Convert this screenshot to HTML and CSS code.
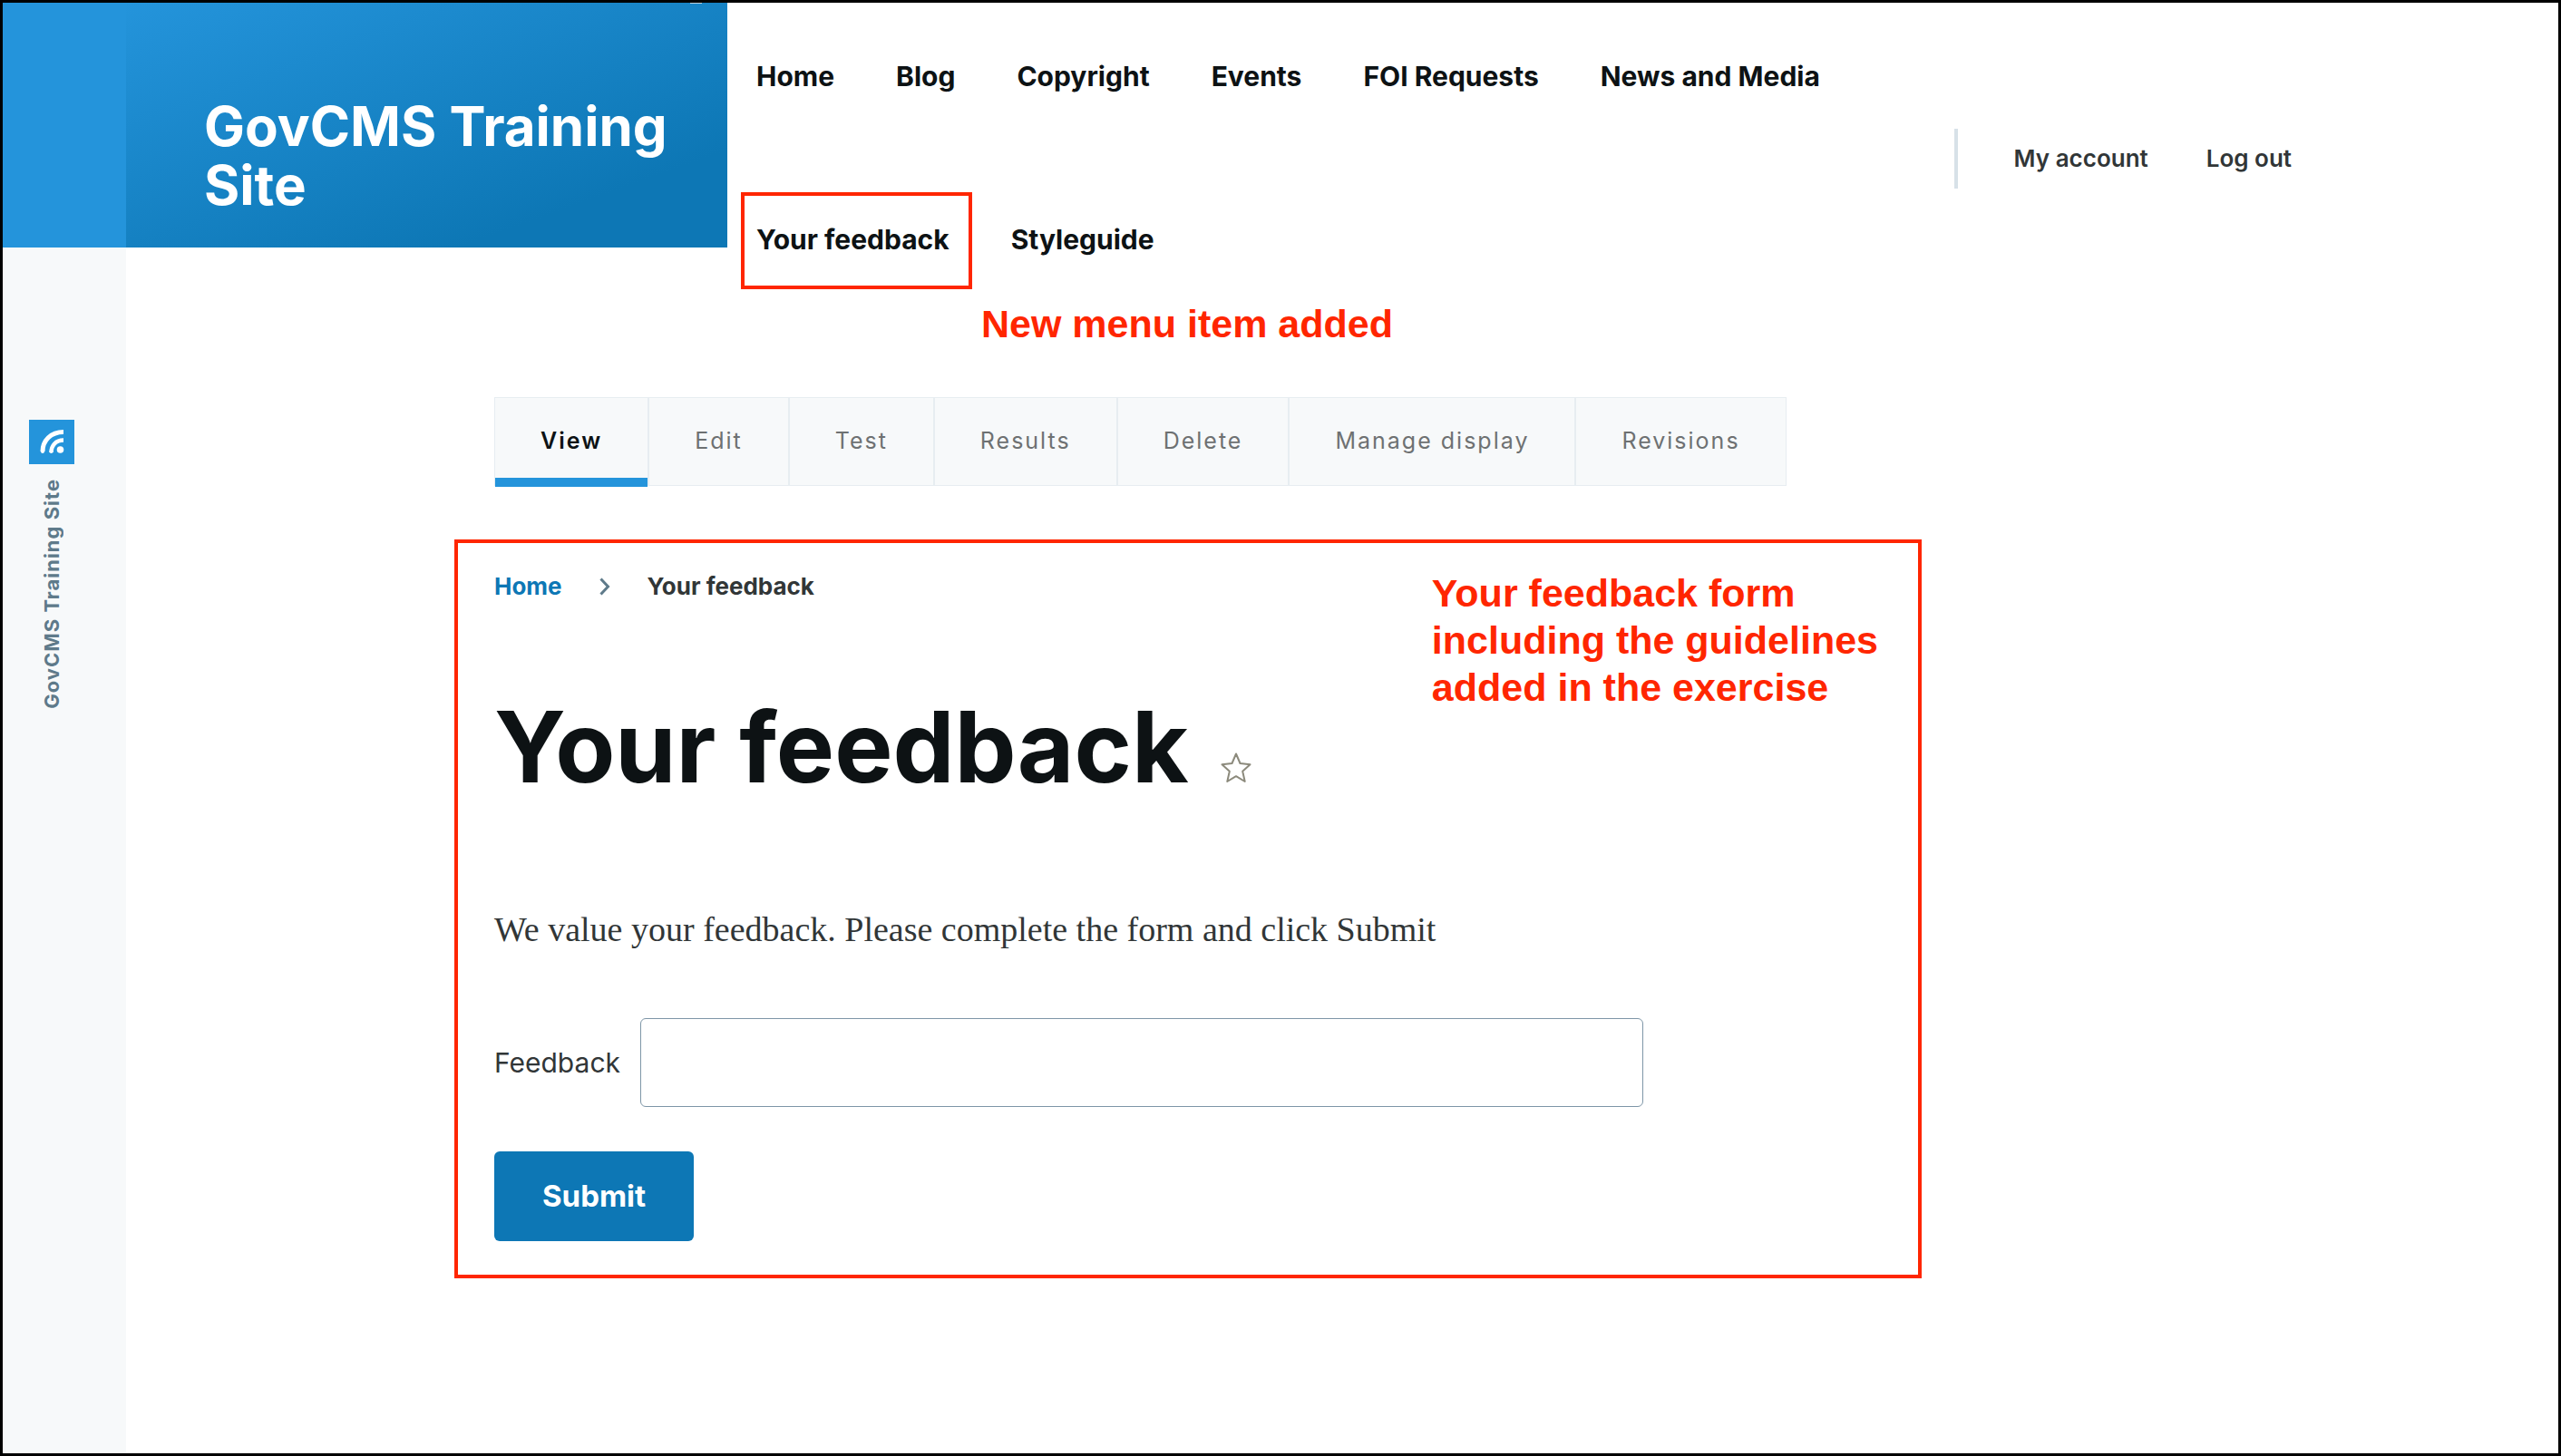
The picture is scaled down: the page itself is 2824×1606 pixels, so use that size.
FILE: index.html
```html
<!DOCTYPE html>
<html lang="en">
<head>
<meta charset="utf-8">
<meta name="viewport" content="width=device-width, initial-scale=1">
<title>Your feedback | GovCMS Training Site</title>
<link rel="stylesheet" href="styles.css">
</head>
<body>
<div class="page">
  <aside class="rail">
    <div class="rail-top"></div>
    <div class="rail-body">
      <a class="feed" href="#" aria-label="RSS feed">
        <svg viewBox="0 0 50 49" width="50" height="49" fill="none" stroke="#fff" stroke-width="4">
          <path d="M15 35C15 23 24 13.500 38 13.500" stroke-width="5"/>
          <path d="M15 35v0M24.500 35v0" stroke-linecap="round"/>
          <path d="M24.500 36C24.500 28.500 29.500 22.500 38 22.500" stroke-width="4.500"/>
          <circle cx="34.500" cy="33" r="3.800" fill="#fff" stroke="none"/>
        </svg>
      </a>
      <span class="rail-name">GovCMS Training Site</span>
    </div>
  </aside>
  <div class="column">
    <header class="header">
      <div class="brand">
        <a class="brand-name" href="#">GovCMS Training Site</a>
        <span class="brand-mark"></span>
      </div>
      <nav class="primary" aria-label="Main">
        <ul class="menu">
          <li><a href="#">Home</a></li>
          <li><a href="#">Blog</a></li>
          <li><a href="#">Copyright</a></li>
          <li><a href="#">Events</a></li>
          <li><a href="#">FOI Requests</a></li>
          <li><a href="#">News and Media</a></li>
          <li class="marked"><a href="#">Your feedback</a><span class="note note-menu">New menu item added</span></li>
          <li><a href="#">Styleguide</a></li>
        </ul>
      </nav>
      <nav class="account" aria-label="Account">
        <a href="#">My account</a>
        <a href="#">Log out</a>
      </nav>
    </header>
    <main class="main">
      <nav class="tabs" aria-label="Tabs">
        <a class="tab tab-active" href="#">View</a>
        <a class="tab" href="#">Edit</a>
        <a class="tab" href="#">Test</a>
        <a class="tab" href="#">Results</a>
        <a class="tab" href="#">Delete</a>
        <a class="tab" href="#">Manage display</a>
        <a class="tab" href="#">Revisions</a>
      </nav>
      <section class="panel">
        <nav class="crumbs" aria-label="Breadcrumb">
          <a href="#">Home</a>
          <svg viewBox="0 0 12 20" width="12" height="20" fill="none" stroke="#5e7a8a" stroke-width="3"><path d="M1.500 1.500l8 8.500-8 8.500"/></svg>
          <span>Your feedback</span>
        </nav>
        <p class="note note-form">Your feedback form<br>including the guidelines<br>added in the exercise</p>
        <div class="title-row">
          <h1 class="title">Your feedback</h1>
          <button class="star" type="button" aria-label="Add to shortcuts">
            <svg viewBox="0 0 34 34" width="34" height="34" fill="none" stroke="#8c8a7c" stroke-width="2" stroke-linejoin="round"><path d="M17 1.500l4.500 10.500 11 1.200-8.300 7.500 2.500 11.300L17 26.200 7.300 32l2.500-11.300L1.500 13.200l11-1.200z"/></svg>
          </button>
        </div>
        <p class="intro">We value your feedback. Please complete the form and click Submit</p>
        <form class="form">
          <div class="field">
            <label for="feedback">Feedback</label>
            <input id="feedback" type="text">
          </div>
          <button class="submit" type="submit">Submit</button>
        </form>
      </section>
    </main>
  </div>
</div>
</body>
</html>
```
FILE: styles.css
```css
*, *::before, *::after { box-sizing: border-box; }

body {
  margin: 0;
  background: #fff;
  color: #313637;
  font-family: Inter, "Liberation Sans", sans-serif;
}

a { color: inherit; text-decoration: none; }

.page {
  display: flex;
  min-height: 100vh;
  border: 3px solid #000;
}

/* Left rail */
.rail { flex: none; width: 136px; background: #f7f9fa; }
.rail-top { height: 270px; background: #2494db; }
.rail-body {
  display: flex;
  flex-direction: column;
  align-items: center;
  width: 50px;
  margin: 190px 0 0 29px;
  gap: 16px;
}
.feed { display: block; height: 49px; background: #2494db; }
.feed svg { display: block; }
.rail-name {
  writing-mode: vertical-rl;
  transform: rotate(180deg);
  color: #5e7a8a;
  font-size: 22px;
  font-weight: 700;
  line-height: 28px;
  letter-spacing: 1px;
  white-space: nowrap;
}

/* Header */
.column { flex: 1; min-width: 0; }
.header { display: flex; align-items: flex-start; padding-right: 294px; }
.brand {
  position: relative;
  flex: none;
  width: 663px;
  height: 270px;
  padding: 104px 50px 0 86px;
  background: linear-gradient(160deg, #2494db 0, #0d77b5 79%);
}
.brand-name {
  display: block;
  color: #fff;
  font-size: 60px;
  font-weight: 700;
  line-height: 65px;
}
.brand-mark {
  position: absolute;
  top: 0;
  right: 28px;
  width: 13px;
  height: 1px;
  background: #b9cfdc;
}
.primary { flex: 1; padding: 63px 32px 0; }
.menu {
  display: flex;
  flex-wrap: wrap;
  gap: 144px 68px;
  margin: 0;
  padding: 0;
  list-style: none;
  color: #0d1214;
  font-size: 30px;
  font-weight: 700;
  line-height: 36px;
  white-space: nowrap;
}
.marked { position: relative; }
.marked::after {
  content: "";
  position: absolute;
  inset: -34px -25px -37px -17px;
  border: 4px solid #ff2600;
}
.account {
  display: flex;
  gap: 64px;
  margin-top: 139px;
  padding-left: 62px;
  border-left: 4px solid #d7e1e8;
  font-size: 26px;
  font-weight: 600;
  line-height: 66px;
  white-space: nowrap;
}

/* Callouts */
.note {
  position: absolute;
  margin: 0;
  color: #ff2600;
  font-family: "Liberation Sans", Arial, sans-serif;
  font-size: 43px;
  font-weight: 700;
  line-height: 52px;
  white-space: nowrap;
}
.note-menu { top: 85px; left: 248px; }
.note-form { top: 29px; right: 44px; }

/* Content */
.main { max-width: 1980px; padding: 156px 0 190px 362px; }
.tabs {
  display: flex;
  width: fit-content;
  margin-left: 44px;
  border: 1px solid #e7edf1;
  background: #f7f9fa;
}
.tab {
  position: relative;
  padding: 0 50px 2px;
  border-right: 2px solid #e7edf1;
  color: #6e7172;
  font-size: 25px;
  line-height: 94px;
  letter-spacing: 2px;
  white-space: nowrap;
}
.tab:last-child { border-right: 0; }
.tab-active { color: #0d1214; font-weight: 600; }
.tab-active::after {
  content: "";
  position: absolute;
  right: 0;
  bottom: -2px;
  left: 0;
  height: 10px;
  background: #2494db;
}
.panel {
  position: relative;
  margin-top: 59px;
  padding: 30px 40px 37px;
  border: 4px solid #ff2600;
}
.crumbs {
  display: flex;
  align-items: center;
  gap: 41px;
  font-size: 26px;
  font-weight: 700;
  line-height: 36px;
}
.crumbs a { color: #0d77b5; }
.title-row { display: flex; align-items: flex-end; gap: 35px; margin-top: 99px; }
.title {
  margin: 0;
  color: #0d1214;
  font-size: 108px;
  font-weight: 700;
  line-height: 120px;
}
.star { padding: 0; border: 0; background: none; margin-bottom: 20px; }
.star svg { display: block; }
.intro {
  margin: 117px 0 0;
  font-family: "Liberation Serif", "Times New Roman", serif;
  font-size: 38px;
  line-height: 48px;
}
.form { margin-top: 74px; }
.field { display: flex; align-items: center; gap: 22px; font-size: 30px; }
.field input {
  flex: none;
  width: 1106px;
  max-width: 100%;
  height: 98px;
  padding: 0 32px;
  border: 1px solid #7e96a7;
  border-radius: 6px;
  background: #fff;
  font: inherit;
}
.submit {
  display: block;
  height: 99px;
  margin-top: 49px;
  padding: 0 53px 2px;
  border: 0;
  border-radius: 6px;
  background: #0d77b5;
  color: #fff;
  font-family: inherit;
  font-size: 33px;
  font-weight: 700;
}
```
